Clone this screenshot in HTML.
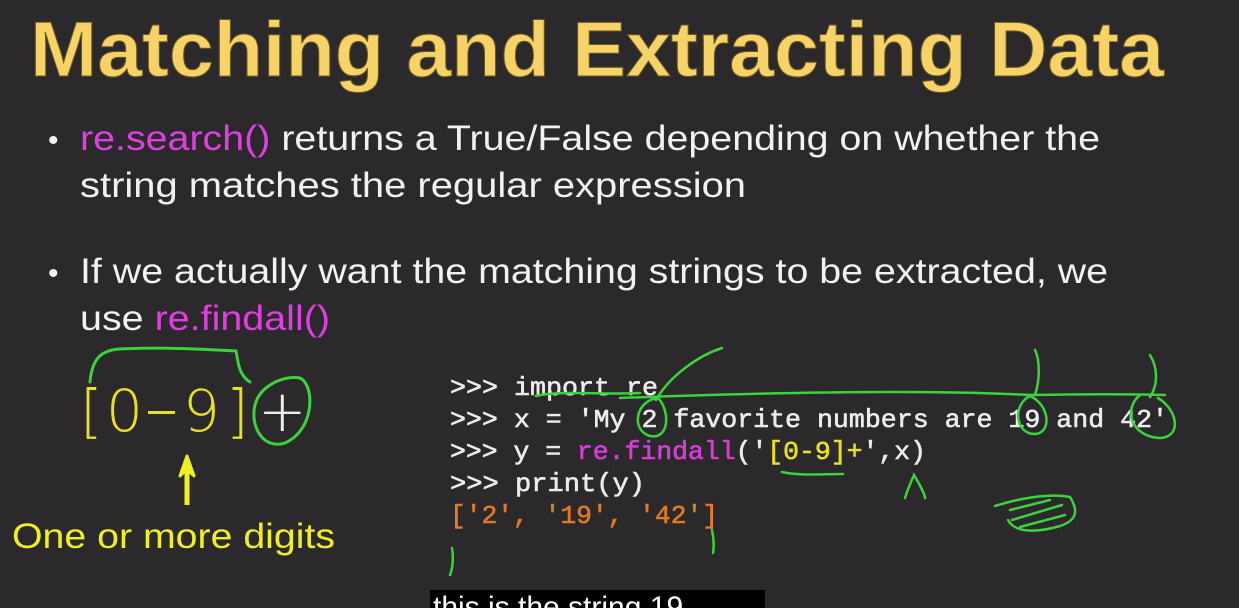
<!DOCTYPE html>
<html><head><meta charset="utf-8"><style>
html,body{margin:0;padding:0;background:#2b292c;}
svg{display:block}
</style></head><body>
<svg width="1239" height="608" viewBox="0 0 1239 608" xmlns="http://www.w3.org/2000/svg">
<rect width="1239" height="608" fill="#2b292c"/>
<text x="30" y="76" font-family="Liberation Sans, sans-serif" font-weight="bold" font-size="78" fill="#f7d266" stroke="#6b5a20" stroke-width="1" textLength="1134" lengthAdjust="spacingAndGlyphs">Matching and Extracting Data</text>
<g font-family="Liberation Sans, sans-serif" font-size="35" fill="#f2f2f2">
<text x="48" y="150" font-size="30">•</text>
<text x="80" y="150" textLength="1020" lengthAdjust="spacingAndGlyphs"><tspan fill="#e03ee0">re.search()</tspan> returns a True/False depending on whether the</text>
<text x="80" y="197" textLength="666" lengthAdjust="spacingAndGlyphs">string matches  the regular expression</text>
<text x="48" y="283" font-size="30">•</text>
<text x="80" y="283" textLength="1028" lengthAdjust="spacingAndGlyphs">If we actually want the matching strings to be extracted, we</text>
<text x="80" y="330" textLength="250" lengthAdjust="spacingAndGlyphs">use <tspan fill="#e03ee0">re.findall()</tspan></text>
</g>
<g font-family="DejaVu Sans, sans-serif" font-weight="200" font-size="58" fill="#e8e020">
<text x="80" y="431">[</text><text x="106" y="431">0</text><text x="183" y="431">9</text><text x="226" y="431">]</text><text x="258" y="431" fill="#eee">+</text>
</g>
<rect x="148" y="411" width="27" height="3" fill="#e8e020"/>
<g fill="none" stroke="#3ad43a" stroke-width="3" stroke-linecap="round">
<path d="M90 382 C92 360 100 350 120 349 C160 347 200 349 236 351 C238 360 238 375 250 382"/>
<path d="M300 378 C315 385 315 430 285 443 C262 450 250 425 255 405 C260 385 285 375 300 378"/>
</g>
<path d="M186 505 L186 470 L180 476 L187 456 L194 476 L188 470 L188 505" fill="#f0f020" stroke="#f0f020" stroke-width="3" stroke-linejoin="round"/>
<text x="12" y="548" font-family="Liberation Sans, sans-serif" font-size="35" fill="#f0f020" textLength="323" lengthAdjust="spacingAndGlyphs">One or more digits</text>
<g font-family="Liberation Mono, monospace" font-size="26" fill="#ececec" stroke="#ececec" stroke-width="0.6">
<text x="450" y="395" textLength="208" lengthAdjust="spacingAndGlyphs">&gt;&gt;&gt; import re</text>
<text x="450" y="427" textLength="718" lengthAdjust="spacingAndGlyphs">&gt;&gt;&gt; x = 'My 2 favorite numbers are 19 and 42'</text>
<text x="450" y="459" textLength="476" lengthAdjust="spacingAndGlyphs">&gt;&gt;&gt; y = <tspan fill="#d83cd8" stroke="#d83cd8">re.findall</tspan>('<tspan fill="#e8e020" stroke="#e8e020">[0-9]+</tspan>',x)</text>
<text x="450" y="491" textLength="195" lengthAdjust="spacingAndGlyphs">&gt;&gt;&gt; print(y)</text>
<text x="450" y="523" fill="#e07a20" stroke="#e07a20" textLength="268" lengthAdjust="spacingAndGlyphs">['2', '19', '42']</text>
</g>
<g fill="none" stroke="#3ad43a" stroke-width="2.5" stroke-linecap="round">
<path d="M536 396 C560 390 600 395 640 393"/>
<path d="M620 398 C700 395 900 388 1030 395 C1080 394 1130 394 1165 395"/>
<path d="M656 400 C670 375 700 355 722 348"/>
<path d="M658 398 C636 400 630 430 650 436 C670 440 670 410 658 398"/>
<path d="M1035 395 C1040 380 1040 360 1035 350"/>
<path d="M1030 396 C1012 405 1015 434 1035 434 C1052 433 1050 405 1030 396"/>
<path d="M1150 397 C1158 385 1158 368 1150 355"/>
<path d="M1140 395 C1122 410 1132 437 1160 438 C1182 437 1178 410 1158 398"/>
<path d="M782 472 C800 476 820 474 843 474"/>
<path d="M905 498 C908 488 912 480 914 475 C920 485 925 495 925 498"/>
<path d="M995 506 C1020 498 1050 493 1070 497 C1078 510 1078 520 1060 526 C1040 532 1015 534 1008 520 M1010 510 L1050 500 M1012 520 L1062 505 M1020 527 L1065 515"/>
<path d="M452 548 C454 560 452 570 450 575"/>
<path d="M712 530 C714 540 714 548 713 553"/>
</g>
<rect x="430" y="590" width="335" height="18" fill="#000"/>
<text x="433" y="617" font-family="Liberation Sans, sans-serif" font-size="30" fill="#fff">this is the string 19</text>
</svg>
</body></html>
